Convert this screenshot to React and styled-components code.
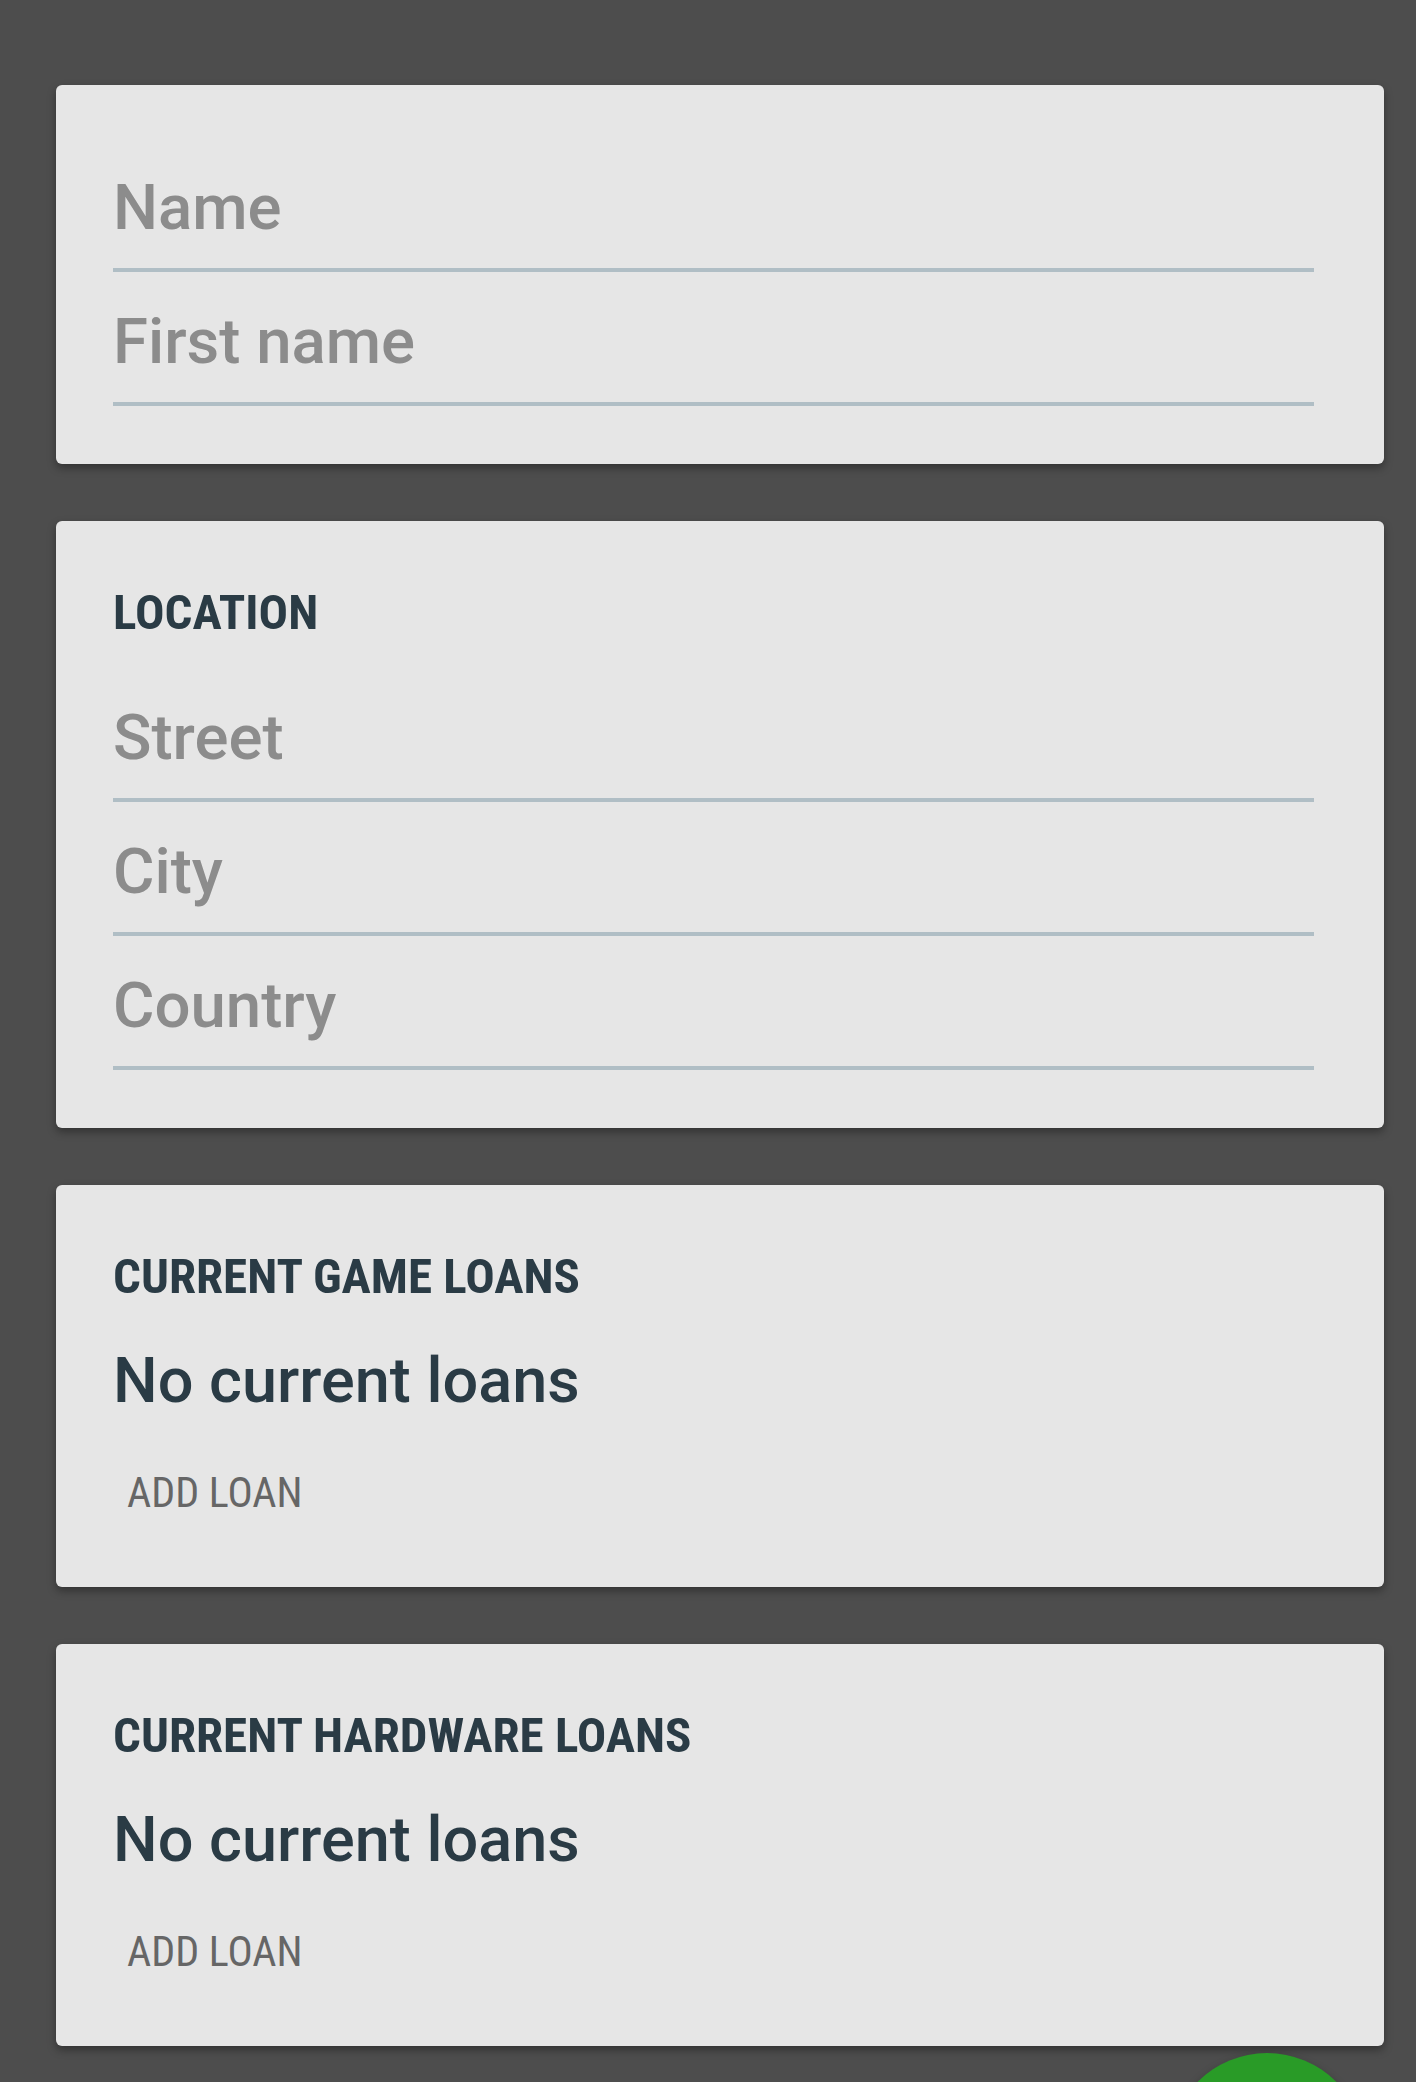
import React from "react";
import styled, { createGlobalStyle } from "styled-components";

// page frame //
const GlobalStyle = createGlobalStyle`
  html, body {
    margin: 0;
    padding: 0;
    background: #4d4d4d;
  }
  body {
    font-family: Roboto, "Noto Sans", sans-serif;
  }
`;

const Page = styled.div`
  display: flex;
  flex-direction: column;
  gap: 57px;
  padding: 85px 32px 40px 56px;
  min-height: 2082px;
  box-sizing: border-box;
`;

const Card = styled.section`
  display: flex;
  flex-direction: column;
  background: #e6e6e6;
  border-radius: 6px;
  box-shadow: 0 4px 8px rgba(0, 0, 0, 0.35);
  padding: 53px 70px 58px 57px;
`;

const SectionTitle = styled.h2`
  margin: 0 0 27px;
  padding-top: 11px;
  font-family: "Roboto Condensed", Roboto, sans-serif;
  font-stretch: condensed;
  font-weight: 700;
  font-size: 49px;
  line-height: 56px;
  color: #2a3b45;
  text-transform: uppercase;
`;

const Field = styled.label`
  display: block;
  padding: 32px 0 23px;
  border-bottom: 4px solid #b0bec5;
`;

const Input = styled.input`
  display: block;
  width: 100%;
  border: 0;
  outline: none;
  background: transparent;
  padding: 0;
  font-family: Roboto, sans-serif;
  font-weight: 500;
  font-size: 63.5px;
  line-height: 75px;
  height: 75px;
  color: #2a3b45;
  &::placeholder {
    color: #8c8c8c;
  }
`;

const EmptyText = styled.p`
  margin: 11px 0 0;
  font-family: Roboto, sans-serif;
  font-weight: 500;
  font-size: 63px;
  line-height: 75px;
  color: #2a3b45;
`;

const FlatButton = styled.button`
  align-self: flex-start;
  margin-top: 38px;
  padding: 12px 14px;
  border: 0;
  background: transparent;
  font-family: "Roboto Condensed", Roboto, sans-serif;
  font-stretch: condensed;
  font-weight: 400;
  font-size: 42px;
  line-height: 49px;
  color: #666666;
  text-transform: uppercase;
  cursor: pointer;
`;

const Fab = styled.button`
  position: fixed;
  left: 1169px;
  top: 2053px;
  width: 196px;
  height: 196px;
  border-radius: 50%;
  border: 0;
  background: #299b27;
  box-shadow: 0 4px 10px rgba(0, 0, 0, 0.3);
`;

function LoanSection(props) {
  return (
    <Card>
      <SectionTitle>{props.title}</SectionTitle>
      <EmptyText>No current loans</EmptyText>
      <FlatButton>Add loan</FlatButton>
    </Card>
  );
}

export default function App() {
  return (
    <>
      <GlobalStyle />
      <Page>
        <Card>
          <Field>
            <Input placeholder="Name" />
          </Field>
          <Field>
            <Input placeholder="First name" />
          </Field>
        </Card>

        <Card>
          <SectionTitle>Location</SectionTitle>
          <Field>
            <Input placeholder="Street" />
          </Field>
          <Field>
            <Input placeholder="City" />
          </Field>
          <Field>
            <Input placeholder="Country" />
          </Field>
        </Card>

        <LoanSection title="Current game loans" />
        <LoanSection title="Current hardware loans" />
      </Page>
      <Fab aria-label="add" />
    </>
  );
}
